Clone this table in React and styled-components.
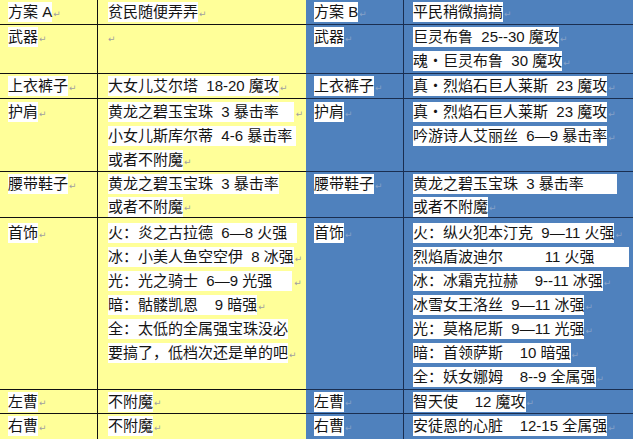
import React from 'react';
import styled, { createGlobalStyle } from 'styled-components';

const Global = createGlobalStyle`
  html, body { margin: 0; padding: 0; background: #ffffff; }
  body { font-family: "Liberation Sans", "Noto Sans CJK SC", sans-serif; }
`;

const Sheet = styled.div`
  display: grid;
  grid-template-columns: 98px 208px 98px 229px;
  grid-template-rows: 25px 49px 25px 73px 46px 172px 24px 25px;
  width: 633px;
  height: 439px;
  overflow: hidden;
  font-size: 15px;
  color: #141414;
`;

const Cell = styled.div`
  box-sizing: border-box;
  overflow: hidden;
  background: ${(p) => (p.$side === 'a' ? '#ffff99' : '#4f81bd')};
  border-bottom: ${(p) =>
    p.$last ? 'none' : `1px solid ${p.$side === 'a' ? '#111111' : '#1a2e50'}`};
  border-right: ${(p) =>
    p.$divider ? `1px solid ${p.$side === 'a' ? '#111111' : '#1a2e50'}` : 'none'};
  padding: ${(p) => p.$top}px 0 0 ${(p) => p.$indent}px;
  --pitch: ${(p) => p.$pitch}px;
`;

const Line = styled.div`
  display: flex;
  align-items: center;
  height: var(--pitch);
  white-space: pre;
`;

const Mark = styled.span`
  display: inline-block;
  height: 20px;
  line-height: 20px;
  background: #ffffff;
  padding-right: ${(p) => p.$extra}px;
`;

const Para = styled.span`
  font-family: "DejaVu Sans", sans-serif;
  font-size: 9px;
  line-height: 9px;
  margin-left: ${(p) => p.$gap}px;
  margin-top: 4px;
  color: ${(p) => (p.$side === 'a' ? '#a0a0a0' : '#86a2c8')};
`;

const L = (t, opts = {}) => ({ t, x: opts.x || 0, p: opts.p !== undefined ? opts.p : false, g: opts.g || 1 });

const indents = [8, 10, 8, 9];
const sides = ['a', 'a', 'b', 'b'];

const rows = [
  {
    top: 0, pitch: 24,
    cells: [
      [L('方案 A', { p: true })],
      [L('贫民随便弄弄', { p: true })],
      [L('方案 B', { p: true })],
      [L('平民稍微搞搞', { p: true })],
    ],
  },
  {
    top: 0, pitch: 24,
    cells: [
      [L('武器', { p: true })],
      [L('', { p: true })],
      [L('武器', { p: true })],
      [L('巨灵布鲁  25--30 魔攻', { p: true }), L('魂・巨灵布鲁  30 魔攻', { p: true })],
    ],
  },
  {
    top: 0, pitch: 24,
    cells: [
      [L('上衣裤子', { p: true })],
      [L('大女儿艾尔塔  18-20 魔攻', { p: true })],
      [L('上衣裤子', { p: true })],
      [L('真・烈焰石巨人莱斯  23 魔攻', { p: true })],
    ],
  },
  {
    top: 1, pitch: 24,
    cells: [
      [L('护肩', { p: true })],
      [
        L('黄龙之碧玉宝珠  3 暴击率', { x: 15, p: true, g: 2 }),
        L('小女儿斯库尔蒂  4-6 暴击率', { x: 4 }),
        L('或者不附魔', { p: true }),
      ],
      [L('护肩', { p: true })],
      [L('真・烈焰石巨人莱斯  23 魔攻', { p: true }), L('吟游诗人艾丽丝  6—9 暴击率', { p: true })],
    ],
  },
  {
    top: 1, pitch: 22.5,
    cells: [
      [L('腰带鞋子', { p: true })],
      [L('黄龙之碧玉宝珠  3 暴击率'), L('或者不附魔', { p: true })],
      [L('腰带鞋子', { p: true })],
      [L('黄龙之碧玉宝珠  3 暴击率', { x: 33 }), L('或者不附魔', { p: true })],
    ],
  },
  {
    top: 3, pitch: 24,
    cells: [
      [L('首饰', { p: true })],
      [
        L('火：炎之古拉德  6—8 火强', { x: 10 }),
        L('冰：小美人鱼空空伊  8 冰强', { p: true }),
        L('光：光之骑士  6—9 光强', { x: 20, p: true, g: 2 }),
        L('暗：骷髅凯恩    9 暗强', { p: true }),
        L('全：太低的全属强宝珠没必'),
        L('要搞了，低档次还是单的吧', { p: true }),
      ],
      [L('首饰', { p: true })],
      [
        L('火：纵火犯本汀克  9—11 火强', { p: true }),
        L('烈焰盾波迪尔          11 火强', { x: 35 }),
        L('冰：冰霜克拉赫    9--11 冰强', { p: true }),
        L('冰雪女王洛丝  9—11 冰强', { p: true }),
        L('光：莫格尼斯  9—11 光强', { p: true }),
        L('暗：首领萨斯    10 暗强', { p: true }),
        L('全：妖女娜姆    8--9 全属强', { p: true }),
      ],
    ],
  },
  {
    top: 0, pitch: 23,
    cells: [
      [L('左曹', { p: true })],
      [L('不附魔', { p: true })],
      [L('左曹', { p: true })],
      [L('智天使    12 魔攻', { p: true })],
    ],
  },
  {
    top: 0, pitch: 24, last: true,
    cells: [
      [L('右曹', { p: true })],
      [L('不附魔', { p: true })],
      [L('右曹', { p: true })],
      [L('安徒恩的心脏    12-15 全属强', { p: true })],
    ],
  },
];

export default function App() {
  return (
    <>
      <Global />
      <Sheet>
        {rows.map((row, ri) =>
          row.cells.map((lines, ci) => (
            <Cell
              key={`${ri}-${ci}`}
              $side={sides[ci]}
              $divider={ci === 0 || ci === 2}
              $last={row.last}
              $top={row.top}
              $pitch={row.pitch}
              $indent={indents[ci]}
            >
              {lines.map((ln, li) => (
                <Line key={li}>
                  {ln.t ? <Mark $extra={ln.x}>{ln.t}</Mark> : null}
                  {ln.p ? (
                    <Para $side={sides[ci]} $gap={ln.t ? ln.g : 0}>
                      ↵
                    </Para>
                  ) : null}
                </Line>
              ))}
            </Cell>
          ))
        )}
      </Sheet>
    </>
  );
}
